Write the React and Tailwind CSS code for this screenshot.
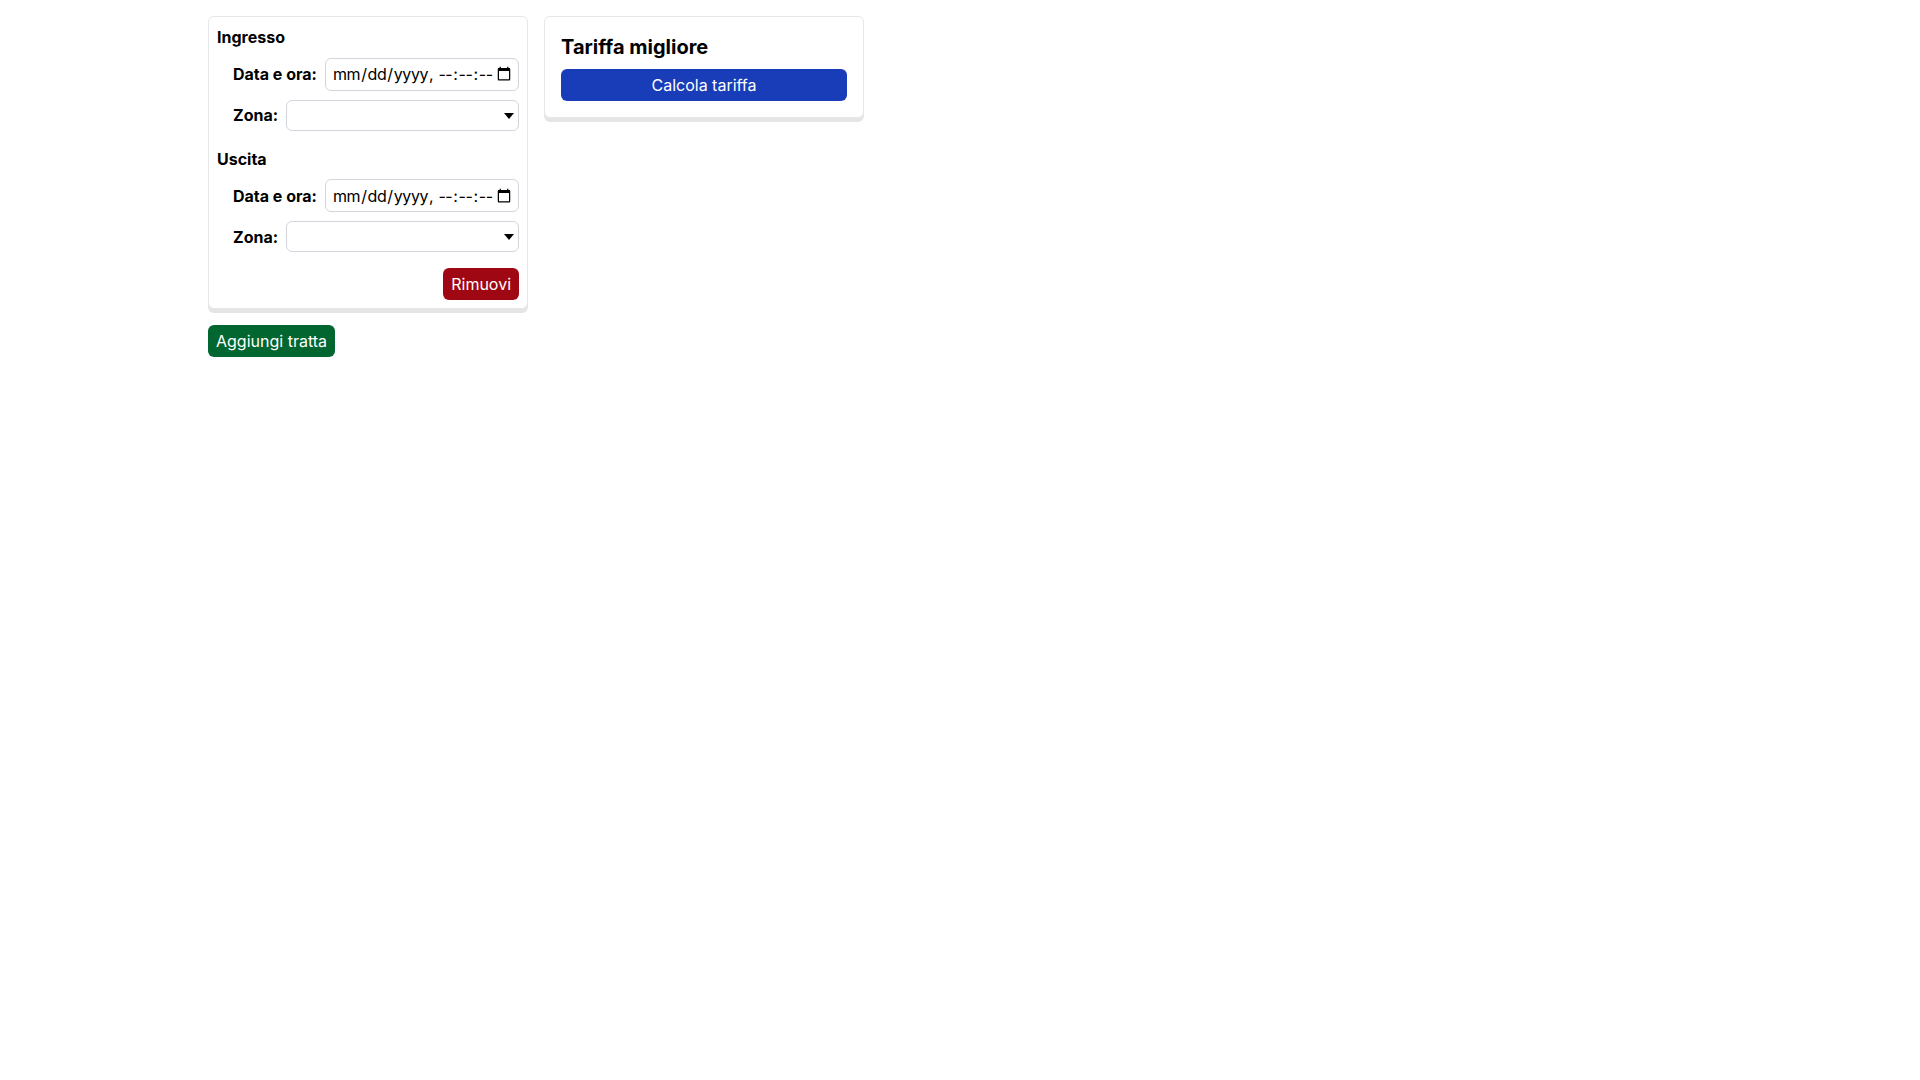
import { useState } from 'react';

function Field({ label, children }) {
  return (
    <div className="flex items-center gap-2 pl-4">
      <label className="font-bold whitespace-nowrap">{label}</label>
      {children}
    </div>
  );
}

function ZonaSelect() {
  return (
    <div className="relative flex-1 min-w-0">
      <select className="w-full h-[31px] px-1 appearance-none border border-gray-300 rounded-md bg-white text-base">
        <option value=""></option>
      </select>
      <svg
        className="pointer-events-none absolute right-[5px] top-[13px]"
        width="10"
        height="6"
        viewBox="0 0 10 6"
      >
        <polygon points="0,0 10,0 5,6" fill="#000" />
      </svg>
    </div>
  );
}

function Punto({ title, first }) {
  return (
    <div className={first ? '' : 'mt-4'}>
      <h3 className="font-bold leading-6">{title}</h3>
      <div className="mt-[8.5px]">
        <Field label="Data e ora:">
          <input
            type="datetime-local"
            step="1"
            className="flex-1 min-w-0 h-[33px] pl-[6px] pr-[6px] border border-gray-300 rounded-md bg-white text-base tracking-[-0.4px] [&::-webkit-calendar-picker-indicator]:ml-0 [&::-webkit-calendar-picker-indicator]:p-0"
          />
        </Field>
      </div>
      <div className="mt-[9px]">
        <Field label="Zona:">
          <ZonaSelect />
        </Field>
      </div>
    </div>
  );
}

export default function App() {
  const [tratte] = useState([1]);

  return (
    <div className="min-h-screen bg-white text-black font-['Inter',sans-serif]">
      <div className="flex items-start gap-4 pl-[208px] pt-4">
        <div className="w-[320px]">
          {tratte.map((t) => (
            <div
              key={t}
              className="border border-gray-200 rounded-md bg-white px-2 pt-2 pb-2 shadow-[0_4px_0_0_#e5e5e5]"
            >
              <Punto title="Ingresso" first />
              <Punto title="Uscita" />
              <div className="flex justify-end mt-4">
                <button className="px-2 py-1 rounded-md bg-red-800 text-white leading-6">
                  Rimuovi
                </button>
              </div>
            </div>
          ))}
          <button className="mt-4 px-2 py-1 rounded-md bg-green-800 text-white leading-6">
            Aggiungi tratta
          </button>
        </div>

        <div className="w-[320px] border border-gray-200 rounded-md bg-white p-4 shadow-[0_4px_0_0_#e5e5e5]">
          <h2 className="text-xl font-bold leading-7">Tariffa migliore</h2>
          <button className="mt-2 w-full py-1 rounded-md bg-blue-800 text-white leading-6">
            Calcola tariffa
          </button>
        </div>
      </div>
    </div>
  );
}
